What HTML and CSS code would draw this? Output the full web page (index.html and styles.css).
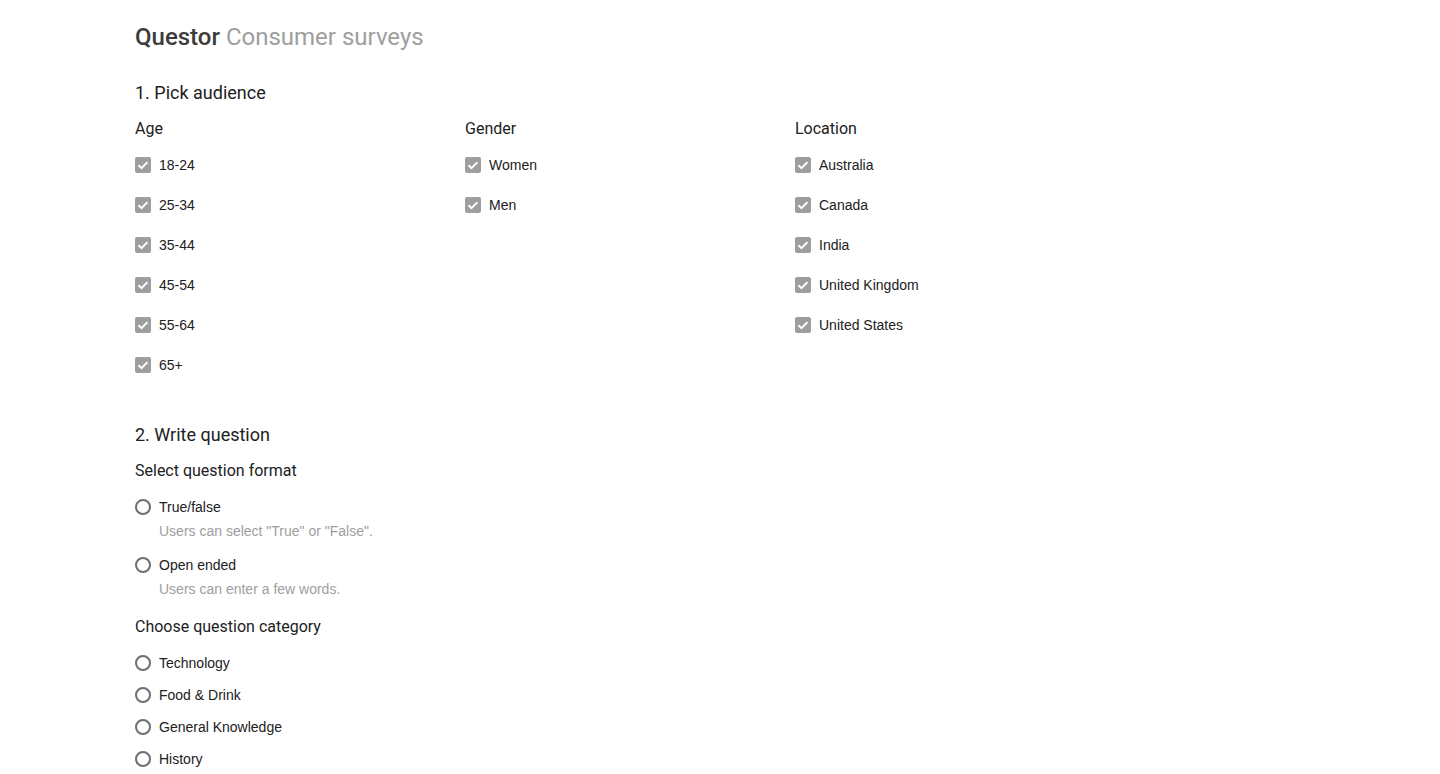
FILE: index.html
```html
<!DOCTYPE html>
<html>
<head>
<meta charset="utf-8">
<link rel="stylesheet" href="styles.css">
</head>
<body>
<div class="page">
  <h1 class="brand"><span class="brand-main">Questor</span> <span class="brand-sub">Consumer surveys</span></h1>

  <h2 class="step">1. Pick audience</h2>
  <div class="audience">
    <div class="col">
      <h3 class="label">Age</h3>
      <div class="check-row"><span class="checkbox"><svg viewBox="0 0 16 16"><path d="M3.5 8.3l3 2.9 6-6.1" fill="none" stroke="#fff" stroke-width="2"/></svg></span>18-24</div>
      <div class="check-row"><span class="checkbox"><svg viewBox="0 0 16 16"><path d="M3.5 8.3l3 2.9 6-6.1" fill="none" stroke="#fff" stroke-width="2"/></svg></span>25-34</div>
      <div class="check-row"><span class="checkbox"><svg viewBox="0 0 16 16"><path d="M3.5 8.3l3 2.9 6-6.1" fill="none" stroke="#fff" stroke-width="2"/></svg></span>35-44</div>
      <div class="check-row"><span class="checkbox"><svg viewBox="0 0 16 16"><path d="M3.5 8.3l3 2.9 6-6.1" fill="none" stroke="#fff" stroke-width="2"/></svg></span>45-54</div>
      <div class="check-row"><span class="checkbox"><svg viewBox="0 0 16 16"><path d="M3.5 8.3l3 2.9 6-6.1" fill="none" stroke="#fff" stroke-width="2"/></svg></span>55-64</div>
      <div class="check-row"><span class="checkbox"><svg viewBox="0 0 16 16"><path d="M3.5 8.3l3 2.9 6-6.1" fill="none" stroke="#fff" stroke-width="2"/></svg></span>65+</div>
    </div>
    <div class="col">
      <h3 class="label">Gender</h3>
      <div class="check-row"><span class="checkbox"><svg viewBox="0 0 16 16"><path d="M3.5 8.3l3 2.9 6-6.1" fill="none" stroke="#fff" stroke-width="2"/></svg></span>Women</div>
      <div class="check-row"><span class="checkbox"><svg viewBox="0 0 16 16"><path d="M3.5 8.3l3 2.9 6-6.1" fill="none" stroke="#fff" stroke-width="2"/></svg></span>Men</div>
    </div>
    <div class="col">
      <h3 class="label">Location</h3>
      <div class="check-row"><span class="checkbox"><svg viewBox="0 0 16 16"><path d="M3.5 8.3l3 2.9 6-6.1" fill="none" stroke="#fff" stroke-width="2"/></svg></span>Australia</div>
      <div class="check-row"><span class="checkbox"><svg viewBox="0 0 16 16"><path d="M3.5 8.3l3 2.9 6-6.1" fill="none" stroke="#fff" stroke-width="2"/></svg></span>Canada</div>
      <div class="check-row"><span class="checkbox"><svg viewBox="0 0 16 16"><path d="M3.5 8.3l3 2.9 6-6.1" fill="none" stroke="#fff" stroke-width="2"/></svg></span>India</div>
      <div class="check-row"><span class="checkbox"><svg viewBox="0 0 16 16"><path d="M3.5 8.3l3 2.9 6-6.1" fill="none" stroke="#fff" stroke-width="2"/></svg></span>United Kingdom</div>
      <div class="check-row"><span class="checkbox"><svg viewBox="0 0 16 16"><path d="M3.5 8.3l3 2.9 6-6.1" fill="none" stroke="#fff" stroke-width="2"/></svg></span>United States</div>
    </div>
  </div>

  <h2 class="step step-2">2. Write question</h2>
  <h3 class="label">Select question format</h3>
  <div class="formats">
    <div class="format">
      <div class="radio-row"><span class="radio"></span>True/false</div>
      <div class="desc">Users can select "True" or "False".</div>
    </div>
    <div class="format">
      <div class="radio-row"><span class="radio"></span>Open ended</div>
      <div class="desc">Users can enter a few words.</div>
    </div>
  </div>
  <h3 class="label">Choose question category</h3>
  <div class="categories">
    <div class="cat-row"><span class="radio"></span>Technology</div>
    <div class="cat-row"><span class="radio"></span>Food &amp; Drink</div>
    <div class="cat-row"><span class="radio"></span>General Knowledge</div>
    <div class="cat-row"><span class="radio"></span>History</div>
  </div>
</div>
</body>
</html>
```

FILE: styles.css
```css
html, body {
  margin: 0;
  padding: 0;
  background: #fff;
}
body {
  font-family: "Liberation Sans", Arial, sans-serif;
  font-size: 14px;
  color: #212121;
}
.page {
  padding: 21px 0 0 135px;
}
.brand {
  margin: 0;
  font-family: Roboto, "Open Sans", sans-serif;
  font-weight: 500;
  font-size: 24px;
  line-height: 32px;
  letter-spacing: 0;
}
.brand-main {
  color: #3c3c3c;
}
.brand-sub {
  color: #9e9e9e;
  font-weight: 400;
}
.step {
  margin: 28px 0 0;
  font-family: Roboto, sans-serif;
  font-weight: 400;
  font-size: 18px;
  line-height: 24px;
  color: #212121;
}
.step-2 {
  margin-top: 38px;
}
.label {
  margin: 14px 0 0;
  font-family: Roboto, sans-serif;
  font-weight: 400;
  font-size: 16px;
  line-height: 20px;
  color: #212121;
}
.audience {
  display: grid;
  grid-template-columns: 330px 330px 330px;
}
.col .label {
  margin-bottom: 6px;
}
.check-row {
  display: flex;
  align-items: center;
  height: 40px;
}
.checkbox {
  width: 16px;
  height: 16px;
  border-radius: 2px;
  background: #9e9e9e;
  margin-right: 8px;
  display: flex;
}
.checkbox svg {
  width: 16px;
  height: 16px;
}
.formats {
  margin-top: 16px;
}
.format {
  margin-bottom: 14px;
}
.format:last-child {
  margin-bottom: 0;
}
.radio-row, .cat-row {
  display: flex;
  align-items: center;
}
.radio-row {
  height: 20px;
}
.desc {
  margin-top: 4px;
  padding-left: 24px;
  line-height: 20px;
  color: #9e9e9e;
}
.formats + .label {
  margin-top: 18px;
}
.categories {
  margin-top: 10px;
}
.cat-row {
  height: 32px;
}
.radio {
  box-sizing: border-box;
  width: 16px;
  height: 16px;
  border: 2px solid #6e6e6e;
  border-radius: 50%;
  margin-right: 8px;
}
```
